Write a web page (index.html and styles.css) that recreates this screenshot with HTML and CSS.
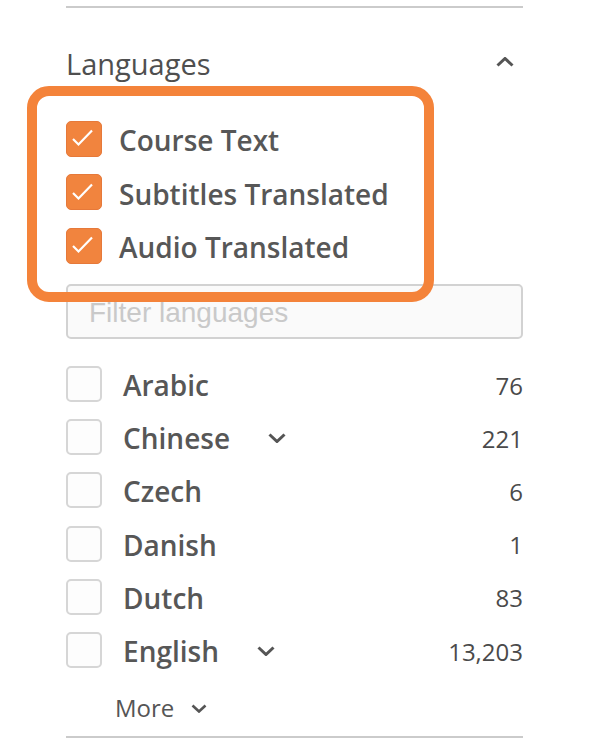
FILE: index.html
```html
<!DOCTYPE html>
<html>
<head>
<meta charset="utf-8">
<link rel="stylesheet" href="styles.css">
</head>
<body>
<div class="panel">
  <div class="divider top"></div>
  <div class="heading">
    <span>Languages</span>
    <svg class="chev-up" width="18" height="10" viewBox="0 0 18 10"><polyline points="1.5,8.5 9,1.5 16.5,8.5" fill="none" stroke="#555" stroke-width="3"/></svg>
  </div>
  <div class="checked-group">
    <div class="crow"><span class="cbox on"><svg width="36" height="36" viewBox="0 0 36 36"><polyline points="7,19 12.5,24.5 26,10.5" fill="none" stroke="#fff" stroke-width="2.2"/></svg></span><span class="clabel">Course Text</span></div>
    <div class="crow"><span class="cbox on"><svg width="36" height="36" viewBox="0 0 36 36"><polyline points="7,19 12.5,24.5 26,10.5" fill="none" stroke="#fff" stroke-width="2.2"/></svg></span><span class="clabel">Subtitles Translated</span></div>
    <div class="crow"><span class="cbox on"><svg width="36" height="36" viewBox="0 0 36 36"><polyline points="7,19 12.5,24.5 26,10.5" fill="none" stroke="#fff" stroke-width="2.2"/></svg></span><span class="clabel">Audio Translated</span></div>
  </div>
  <input class="filter" type="text" placeholder="Filter languages">
  <div class="list">
    <div class="lrow"><span class="cbox"></span><span class="llabel">Arabic</span><span class="count">76</span></div>
    <div class="lrow"><span class="cbox"></span><span class="llabel">Chinese</span><svg class="chev" width="18" height="10" viewBox="0 0 18 10"><polyline points="1.5,1.5 9,8.5 16.5,1.5" fill="none" stroke="#555" stroke-width="3"/></svg><span class="count">221</span></div>
    <div class="lrow"><span class="cbox"></span><span class="llabel">Czech</span><span class="count">6</span></div>
    <div class="lrow"><span class="cbox"></span><span class="llabel">Danish</span><span class="count">1</span></div>
    <div class="lrow"><span class="cbox"></span><span class="llabel">Dutch</span><span class="count">83</span></div>
    <div class="lrow"><span class="cbox"></span><span class="llabel">English</span><svg class="chev" width="18" height="10" viewBox="0 0 18 10"><polyline points="1.5,1.5 9,8.5 16.5,1.5" fill="none" stroke="#555" stroke-width="3"/></svg><span class="count">13,203</span></div>
  </div>
  <div class="more"><span>More</span><svg class="chev-more" width="16" height="9" viewBox="0 0 16 9"><polyline points="1.5,1.5 8,7.5 14.5,1.5" fill="none" stroke="#555" stroke-width="2.6"/></svg></div>
  <div class="divider bottom"></div>
  <div class="annot"></div>
</div>
</body>
</html>
```
FILE: styles.css
```css
html, body {
  margin: 0;
  padding: 0;
  background: #fff;
}
body {
  font-family: "Open Sans", "Liberation Sans", sans-serif;
  color: #555;
}
.panel {
  position: relative;
  width: 457px;
  padding-left: 66px;
  padding-top: 6px;
}
.divider {
  height: 2px;
  background: #cbcbcb;
}
.heading {
  margin-top: 35px;
  height: 40px;
  line-height: 40px;
  font-size: 29px;
  font-weight: 400;
  display: flex;
  align-items: center;
  justify-content: space-between;
  color: #4f4f4f;
}
.heading span {
  margin-top: 2px;
}
.chev-up {
  margin-right: 9px;
  margin-top: -3px;
}
.checked-group {
  margin-top: 29px;
}
.crow {
  height: 53.5px;
  display: flex;
  align-items: center;
}
.cbox {
  width: 36px;
  height: 36px;
  box-sizing: border-box;
  border: 2px solid #d6d6d6;
  border-radius: 5px;
  background: #fdfdfd;
  flex: none;
  position: relative;
}
.cbox.on {
  background: #f1843e;
  border: 1.5px solid #e6793a;
}
.cbox.on svg {
  position: absolute;
  left: -1.5px;
  top: -1.5px;
}
.clabel {
  margin-left: 17px;
  margin-top: 3px;
  font-size: 28px;
  font-weight: 600;
  line-height: 40px;
  color: #575757;
}
.filter {
  display: block;
  margin: 11px 0 0 0;
  width: 457px;
  height: 55px;
  box-sizing: border-box;
  border: 2px solid #d2d2d2;
  border-radius: 5px;
  background: #fafafa;
  padding: 3px 0 0 21px;
  font-family: "Liberation Sans", Arial, sans-serif;
  font-size: 28px;
  color: #505050;
  outline: none;
}
.filter::placeholder {
  color: #c9c9c9;
}
.list {
  margin-top: 19px;
}
.lrow {
  height: 53.2px;
  display: flex;
  align-items: center;
}
.llabel {
  margin-left: 21px;
  margin-top: 2px;
  font-size: 28px;
  font-weight: 600;
  line-height: 40px;
  color: #575757;
}
.chev {
  margin-left: 38px;
  margin-top: 2px;
}
.count {
  margin-left: auto;
  margin-top: 2px;
  font-size: 24px;
  font-weight: 400;
  color: #4a4a4a;
}
.more {
  margin-top: 11px;
  height: 40px;
  display: flex;
  align-items: center;
  padding-left: 49px;
  font-size: 24px;
  font-weight: 400;
  color: #555;
}
.chev-more {
  margin-left: 17px;
  margin-top: 2px;
}
.bottom {
  margin-top: 8px;
}
.annot {
  position: absolute;
  left: 27px;
  top: 86px;
  width: 407px;
  height: 216px;
  box-sizing: border-box;
  border: 10px solid #f4833a;
  border-radius: 22px;
  pointer-events: none;
}
```
